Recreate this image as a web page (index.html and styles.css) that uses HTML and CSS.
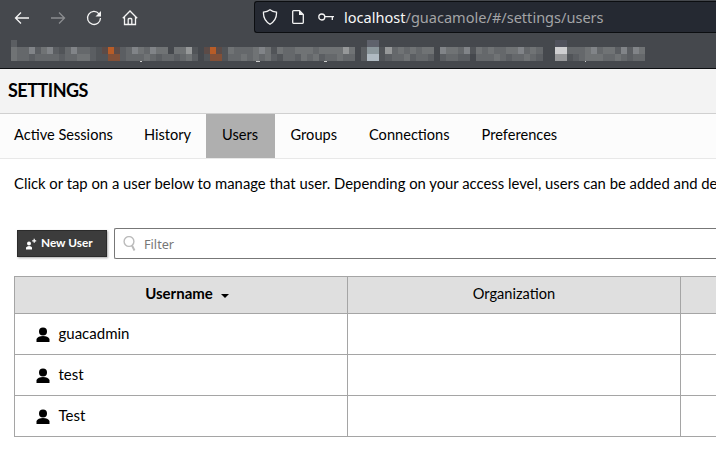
FILE: index.html
```html
<!DOCTYPE html>
<html lang="en">
<head>
<meta charset="utf-8">
<title>Settings</title>
<link rel="stylesheet" href="styles.css">
</head>
<body>
<header class="browser">
  <div class="toolbar">
    <nav class="controls">
      <svg class="icon" viewBox="0 0 16 16"><path d="M15 8H1.500M7 2.500L1.500 8L7 13.500"/></svg>
      <svg class="icon dim" viewBox="0 0 16 16"><path d="M1 8H14.500M9 2.500L14.500 8L9 13.500"/></svg>
      <svg class="icon" viewBox="0 0 16 16"><path d="M13 3.800A6.500 6.500 0 1 0 14.500 8"/><path class="solid" d="M15 1v5.500H9.500z"/></svg>
      <svg class="icon" viewBox="0 0 16 16"><path d="M.8 8.300L8 1L15.200 8.300M2.500 6.800V14.500H13.500V6.800M6.200 14.500V9.500Q6.200 8.500 7 8.500H9Q9.800 8.500 9.800 9.500V14.500"/></svg>
    </nav>
    <div class="address">
      <svg class="icon" viewBox="0 0 16 16"><path d="M8 .8Q10.500 2.700 14.500 3.200Q15 11 8 15.200Q1 11 1.500 3.200Q5.500 2.700 8 .8z"/></svg>
      <svg class="icon" viewBox="0 0 16 16"><path d="M3.500 1.700H9.500L13.300 5.500V13.500Q13.300 14.300 12.500 14.300H3.500Q2.700 14.300 2.700 13.500V2.500Q2.700 1.700 3.500 1.700z"/><path class="solid" d="M9 1.500V6H13.500z"/></svg>
      <svg class="icon" viewBox="0 0 16 16"><circle cx="3.800" cy="8" r="3"/><path d="M6.800 7.700H16M14.300 8V11"/></svg>
      <span class="url"><b>localhost</b>/guacamole/#/settings/users</span>
    </div>
  </div>
  <svg class="bookmarks" id="bookmarks" viewBox="0 0 716 28"></svg>
</header>
<main>
  <h1>SETTINGS</h1>
  <nav class="tabs">
    <a>Active Sessions</a><a>History</a><a class="current">Users</a><a>Groups</a><a>Connections</a><a>Preferences</a>
  </nav>
  <p class="help">Click or tap on a user below to manage that user. Depending on your access level, users can be added and de</p>
  <div class="actions">
    <button class="new-user"><svg viewBox="0 0 12 12"><circle cx="4" cy="5.500" r="2"/><path d="M1 11.500V9.500Q2 8 4 8Q6.500 8 7 9.500V11.500zM7.200 2.200h1.400V.8H9.800V2.200h1.400v1.200H9.800V4.800H8.600V3.400H7.200z"/></svg>New User</button>
    <div class="filter"><svg viewBox="0 0 14 16"><circle cx="6" cy="5.500" r="4.900"/><path class="handle" d="M9 9.500L11.500 14.500"/></svg>Filter</div>
  </div>
  <table>
    <thead><tr><th class="sorted"><span>Username</span><i></i></th><th><span>Organization</span></th><th class="last"></th></tr></thead>
    <tbody>
      <tr><td><div class="user"><svg viewBox="0 0 14 16"><circle cx="7" cy="4.500" r="4"/><path d="M.5 15V12Q2 9 7 9Q12 9 13.500 12V15z"/></svg><span>guacadmin</span></div></td><td></td><td></td></tr>
      <tr><td><div class="user"><svg viewBox="0 0 14 16"><circle cx="7" cy="4.500" r="4"/><path d="M.5 15V12Q2 9 7 9Q12 9 13.500 12V15z"/></svg><span>test</span></div></td><td></td><td></td></tr>
      <tr><td><div class="user"><svg viewBox="0 0 14 16"><circle cx="7" cy="4.500" r="4"/><path d="M.5 15V12Q2 9 7 9Q12 9 13.500 12V15z"/></svg><span>Test</span></div></td><td></td><td></td></tr>
    </tbody>
  </table>
</main>
<script src="bookmarks.js"></script>
</body>
</html>
```
FILE: styles.css
```css
* { box-sizing: border-box; }
html { overflow: hidden; }
body { margin: 0; width: 716px; height: 467px; overflow: hidden; background: #fff; color: #000; font: 15px "Lato", sans-serif; }
.browser { height: 69px; background: #45484d; border-bottom: 1px solid #0c0e11; }
.toolbar { display: flex; height: 36px; padding-top: 1px; }
.controls { display: flex; flex: none; width: 254px; padding: 9px 0 0 14px; gap: 20px; }
.icon { width: 16px; height: 16px; fill: none; stroke: #f4f4f4; stroke-width: 1.3; flex: none; }
.icon .solid { fill: #f4f4f4; stroke: none; }
.dim { opacity: .4; }
.address { display: flex; align-items: center; flex: 1; gap: 12px; height: 32px; padding-left: 7px; background: #252932; border: 1px solid #0c0e11; border-right: 0; border-radius: 3px 0 0 3px; }
.url { margin-left: -2px; font: 14.55px "Noto Sans", sans-serif; color: #a3a4a6; white-space: nowrap; }
.url b { font-weight: 400; color: #f8f8f8; }
.bookmarks { display: block; width: 716px; height: 28px; }
main { overflow: hidden; }
h1 { margin: 0; height: 45px; padding: 10px 8px; background: #f3f3f3; border-bottom: 1px solid #d0d0d0; font-size: 18px; line-height: 22px; letter-spacing: -.5px; }
.tabs { display: flex; height: 45px; background: #fcfcfc; border-bottom: 1px solid #e8e8e8; font-size: 14.6px; }
.tabs a { padding: 0 16px; line-height: 41px; }
.tabs a:first-child { padding: 0 15px 0 14px; }
.tabs a:nth-child(2) { padding-right: 15px; }
.tabs .current { padding-right: 16.500px; background: #afafaf; }
.help { margin: 0; padding: 13px 0 0 14px; line-height: 22px; height: 69px; font-size: 14.83px; white-space: nowrap; }
.actions { display: flex; gap: 7px; padding-left: 17px; height: 48px; }
.new-user { display: flex; align-items: center; flex: none; width: 90px; height: 27px; margin-top: 2px; padding: 0 0 2px 7px; gap: 4px; border: 1px solid #2b2b2b; background: #3c3c3c; color: #fff; font: bold 11.8px "Lato", sans-serif; white-space: nowrap; box-shadow: 1px 1px 2px #aaa; }
.new-user svg { width: 12px; height: 12px; fill: #fff; margin-top: 3px; }
.filter { display: flex; align-items: center; flex: 1; height: 31px; border: 1px solid #777; border-right: 0; border-radius: 2px 0 0 2px; padding-left: 8px; gap: 7px; font: 12.7px "Noto Sans", sans-serif; color: #777; }
.filter svg { width: 14px; height: 16px; fill: none; stroke: #bbb; stroke-width: 1.4; }
.filter .handle { stroke-width: 2; }
table { width: 703px; margin-left: 14px; border-collapse: collapse; table-layout: fixed; }
th, td { width: 333px; border: 1px solid #a5a5a5; height: 41px; padding: 0; }
th { height: 37px; padding-bottom: 4px; background: #dfdfdf; font-weight: 400; font-size: 14.6px; }
.last { width: 37px; }
th:last-child, td:last-child { border-right: 0; }
.sorted { padding-left: 12px; font-weight: 700; font-size: 15px; }
.sorted i { display: inline-block; margin: 0 0 1px 8px; border: 4px solid transparent; border-top-color: #000; border-bottom: 0; }
.user { display: flex; align-items: center; gap: 8.500px; height: 40px; padding: 0 0 3px 21px; font-size: 15px; }
.user svg { width: 14px; height: 16px; margin-top: 4px; }
```
FILE: bookmarks.js
```js
// Pixelated bookmark labels: [first column, row, one tone letter per cell]
const tones = {
  a: '#515458', b: '#5b5e62', c: '#65686b', d: '#707375', e: '#818488', f: '#969899',
  O: '#b85c27', P: '#825038', Q: '#5c4b47', W: '#cfcfd1', V: '#98999b', U: '#b0bac2', T: '#8c979c', S: '#5f626c', R: '#50525c'
};
const runs = [
  [0, 0, 'b'], [59, 0, 'SS'], [90, 0, 'RR'],
  [0, 1, 'dccebdebaceccba'], [15, 1, 'QOQbcedcedd'], [27, 1, 'ddfa'],
  [32, 1, 'QOQadcccdedadccdddcddddfd'],
  [58, 1, 'bTTafcdcdcdd'], [71, 1, 'eddcea'], [77, 1, 'dcdccddecdc'],
  [90, 1, 'WWcccdecddbebed'],
  [0, 2, 'dccbccccbccddba'], [15, 2, 'aPPbcccdcbccbcdb'],
  [32, 2, 'aPPaccdcdcdbaccbdcdbccdcc'],
  [58, 2, 'bUUabccdbccb'], [71, 2, 'bccbb'], [77, 2, 'cccdcbccdcb'],
  [90, 2, 'VVabcdddccdcbcc']
];
const svg = document.getElementById('bookmarks');
const rect = (x, y, width, height, fill) => {
  const r = document.createElementNS('http://www.w3.org/2000/svg', 'rect');
  Object.entries({ x, y, width, height, fill }).forEach(([k, v]) => r.setAttribute(k, v));
  svg.append(r);
};
runs.forEach(([column, row, cells]) => [...cells].forEach((tone, i) => {
  const left = Math.round(11 + (column + i) * 6.04);
  const right = Math.round(11 + (column + i + 1) * 6.04);
  rect(left, 4 + row * 7, right - left, 7, tones[tone]);
}));
[[140, 2], [256, 4], [324, 3], [585, 1]].forEach(([x, w]) => rect(x, 25, w, 1, '#cccccc'));
```
